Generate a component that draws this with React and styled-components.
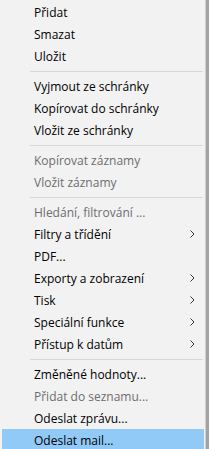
import React from 'react';
import styled, { createGlobalStyle } from 'styled-components';

const GlobalStyle = createGlobalStyle`
  html, body {
    margin: 0;
    padding: 0;
    background: #a3a3a3;
    overflow: hidden;
  }
`;

const groups = [
  [
    { label: 'Přidat' },
    { label: 'Smazat' },
    { label: 'Uložit' },
  ],
  [
    { label: 'Vyjmout ze schránky' },
    { label: 'Kopírovat do schránky' },
    { label: 'Vložit ze schránky' },
  ],
  [
    { label: 'Kopírovat záznamy', disabled: true },
    { label: 'Vložit záznamy', disabled: true },
  ],
  [
    { label: 'Hledání, filtrování ...', disabled: true },
    { label: 'Filtry a třídění', sub: true },
    { label: 'PDF...' },
    { label: 'Exporty a zobrazení', sub: true },
    { label: 'Tisk', sub: true },
    { label: 'Speciální funkce', sub: true },
    { label: 'Přístup k datům', sub: true },
  ],
  [
    { label: 'Změněné hodnoty...' },
    { label: 'Přidat do seznamu...', disabled: true },
    { label: 'Odeslat zprávu...' },
    { label: 'Odeslat mail...', active: true },
  ],
];

const Chevron = () => (
  <svg width="5" height="8" viewBox="0 0 5 8">
    <path d="M0.5 0.5 L4 4 L0.5 7.5" fill="none" stroke="#333" strokeWidth="1" />
  </svg>
);

const App = () => (
  <>
    <GlobalStyle />
    <Screen>
      <Menu>
        {groups.map((items, gi) => (
          <React.Fragment key={gi}>
            {gi > 0 && <Separator />}
            {items.map((item) => (
              <Item key={item.label} $disabled={item.disabled} $active={item.active}>
                <Label>{item.label}</Label>
                {item.sub && (
                  <Arrow>
                    <Chevron />
                  </Arrow>
                )}
              </Item>
            ))}
          </React.Fragment>
        ))}
      </Menu>
      <Behind />
    </Screen>
  </>
);

const Screen = styled.div`
  display: flex;
  width: 209px;
  height: 449px;
  overflow: hidden;
`;

const Menu = styled.div`
  width: 206px;
  flex-shrink: 0;
  background: #f2f2f2;
  border-right: 1px solid #cfcfcf;
  padding: 1px 0 0 2px;
  box-sizing: border-box;
  font-family: 'Open Sans', 'Noto Sans', sans-serif;
  font-size: 12px;
`;

const Item = styled.div`
  display: flex;
  align-items: center;
  height: 22px;
  padding-left: 32px;
  margin-right: 1px;
  color: ${(p) => (p.$disabled ? '#6d6d6d' : '#000')};
  background: ${(p) => (p.$active ? '#91c9f7' : 'transparent')};
`;

const Label = styled.span`
  flex: 1;
  white-space: nowrap;
`;

const Arrow = styled.span`
  display: flex;
  align-items: center;
  width: 14px;
`;

const Separator = styled.div`
  height: 1px;
  margin: 4px 2px 3px 28px;
  background: #d7d7d7;
`;

const Behind = styled.div`
  flex: 1;
  background: #a3a3a3;
`;

export default App;
